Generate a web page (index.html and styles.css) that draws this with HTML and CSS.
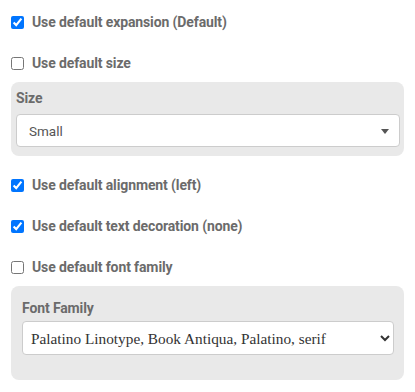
FILE: index.html
```html
<!DOCTYPE html>
<html lang="en">
<head>
    <title>Text Settings</title>
    <link rel="stylesheet" href="styles.css">
</head>
<body>
    <div class="settings">
        <label class="check-row">
            <input type="checkbox" checked>
            <span>Use default expansion (Default)</span>
        </label>
        <label class="check-row">
            <input type="checkbox">
            <span>Use default size</span>
        </label>

        <!-- Size panel -->
        <div class="panel panel-size">
            <div class="panel-label">Size</div>
            <div class="fake-select">
                <select>
                    <option>Small</option>
                    <option>Medium</option>
                    <option>Large</option>
                </select>
            </div>
        </div>

        <label class="check-row">
            <input type="checkbox" checked>
            <span>Use default alignment (left)</span>
        </label>
        <label class="check-row">
            <input type="checkbox" checked>
            <span>Use default text decoration (none)</span>
        </label>
        <label class="check-row">
            <input type="checkbox">
            <span>Use default font family</span>
        </label>

        <!-- Font family panel -->
        <div class="panel panel-font">
            <div class="panel-label">Font Family</div>
            <select class="font-select">
                <option>Palatino Linotype, Book Antiqua, Palatino, serif</option>
                <option>Arial, Helvetica, sans-serif</option>
                <option>Courier New, monospace</option>
            </select>
        </div>
    </div>
</body>
</html>
```
FILE: styles.css
```css
body {
    margin: 0;
    font-family: Roboto, "Liberation Sans", sans-serif;
    background: #ffffff;
    color: #6b6b6b;
}

.settings {
    display: flex;
    flex-direction: column;
    padding: 0 11px;
}

.check-row {
    display: flex;
    align-items: center;
    height: 20px;
    padding: 12px 0 9px;
    font-size: 14px;
    font-weight: 700;
    letter-spacing: -0.12px;
    cursor: pointer;
}

.check-row input {
    margin: 0 8px 0 0;
    width: 13px;
    height: 13px;
}

.panel {
    background: #e9e9e9;
    border-radius: 8px;
    margin-bottom: 7px;
}

.panel-label {
    font-size: 14px;
    font-weight: 700;
    line-height: 20px;
    letter-spacing: -0.12px;
}

.panel-size {
    padding: 6px 4px 9px 5px;
}

.panel-size .panel-label {
    margin-bottom: 6px;
}

.fake-select {
    position: relative;
}

.fake-select select {
    appearance: none;
    -webkit-appearance: none;
    width: 100%;
    height: 33px;
    padding: 0 12px;
    border: 1px solid #cccccc;
    border-radius: 4px;
    background: #ffffff;
    font-family: Roboto, sans-serif;
    font-size: 13.5px;
    color: #555555;
}

.fake-select::after {
    content: "";
    position: absolute;
    right: 11px;
    top: 15px;
    border-left: 4px solid transparent;
    border-right: 4px solid transparent;
    border-top: 5px solid #555555;
    pointer-events: none;
}

.panel-font {
    padding: 12px 10px 25px 11px;
}

.panel-font .panel-label {
    margin-bottom: 3px;
}

.font-select {
    width: 100%;
    height: 34px;
    padding: 0 4px;
    border: 1px solid #cccccc;
    border-radius: 4px;
    background: #ffffff;
    font-family: "Palatino Linotype", "Book Antiqua", Palatino, "Liberation Serif", serif;
    font-size: 15.3px;
    color: #333333;
}
```
